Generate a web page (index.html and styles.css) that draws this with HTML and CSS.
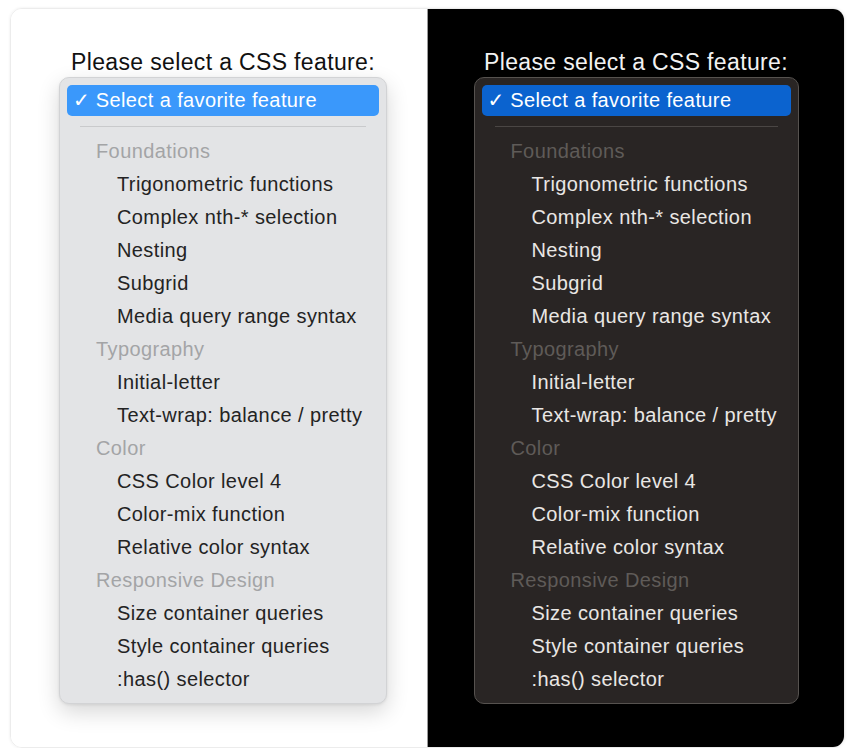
FILE: index.html
```html
<!DOCTYPE html>
<html>
<head>
<meta charset="utf-8">
<link rel="stylesheet" href="styles.css">
</head>
<body>
<div class="frame">
  <section class="panel light">
    <div class="label">Please select a CSS feature:</div>
    <div class="menu">
      <div class="selected"><span class="check">✓</span> Select a favorite feature</div>
      <div class="sep"></div>
      <div class="group">Foundations</div>
      <div class="item">Trigonometric functions</div>
      <div class="item">Complex nth-* selection</div>
      <div class="item">Nesting</div>
      <div class="item">Subgrid</div>
      <div class="item">Media query range syntax</div>
      <div class="group">Typography</div>
      <div class="item">Initial-letter</div>
      <div class="item">Text-wrap: balance / pretty</div>
      <div class="group">Color</div>
      <div class="item">CSS Color level 4</div>
      <div class="item">Color-mix function</div>
      <div class="item">Relative color syntax</div>
      <div class="group">Responsive Design</div>
      <div class="item">Size container queries</div>
      <div class="item">Style container queries</div>
      <div class="item">:has() selector</div>
    </div>
  </section>
  <section class="panel dark">
    <div class="label">Please select a CSS feature:</div>
    <div class="menu">
      <div class="selected"><span class="check">✓</span> Select a favorite feature</div>
      <div class="sep"></div>
      <div class="group">Foundations</div>
      <div class="item">Trigonometric functions</div>
      <div class="item">Complex nth-* selection</div>
      <div class="item">Nesting</div>
      <div class="item">Subgrid</div>
      <div class="item">Media query range syntax</div>
      <div class="group">Typography</div>
      <div class="item">Initial-letter</div>
      <div class="item">Text-wrap: balance / pretty</div>
      <div class="group">Color</div>
      <div class="item">CSS Color level 4</div>
      <div class="item">Color-mix function</div>
      <div class="item">Relative color syntax</div>
      <div class="group">Responsive Design</div>
      <div class="item">Size container queries</div>
      <div class="item">Style container queries</div>
      <div class="item">:has() selector</div>
    </div>
  </section>
</div>
</body>
</html>
```
FILE: styles.css
```css
html, body {
  margin: 0;
  padding: 0;
  background: #ffffff;
}
body {
  font-family: "Liberation Sans", Arial, sans-serif;
}
.frame {
  margin: 8px 0 0 10px;
  width: 835px;
  height: 740px;
  box-sizing: border-box;
  border: 1px solid #ececec;
  border-radius: 12px;
  box-shadow: 0 0 3px rgba(0,0,0,0.08);
  overflow: hidden;
  display: grid;
  grid-template-columns: 417px 1fr;
}
.panel {
  display: flex;
  flex-direction: column;
  align-items: center;
  padding-top: 40px;
}
.light {
  background: #ffffff;
  border-right: 1px solid #9a9a9a;
  padding-left: 8px;
}
.dark {
  background: #000000;
}
.label {
  font-size: 23px;
  line-height: 27px;
  letter-spacing: 0.35px;
}
.light .label { color: #111; }
.dark .label { color: #f2f2f2; }
.menu {
  margin-top: 1px;
  box-sizing: border-box;
  border-radius: 10px;
  padding: 7px 7px 7px;
  font-size: 20px;
  letter-spacing: 0.4px;
}
.light .menu {
  width: 328px;
  background: #e3e4e6;
  border: 1px solid #d2d3d5;
  box-shadow: 0 8px 22px rgba(0,0,0,0.16), 0 1px 3px rgba(0,0,0,0.08);
}
.dark .menu {
  width: 325px;
  background: #292524;
  border: 1px solid #56524f;
}
.selected {
  height: 31px;
  line-height: 31px;
  border-radius: 5px;
  padding-left: 6px;
  color: #ffffff;
}
.light .selected { background: #3a98fb; }
.dark .selected { background: #0b63cf; }
.check { font-family: "DejaVu Sans", sans-serif; font-size: 20px; font-weight: bold; letter-spacing: 0; }
.sep {
  height: 1px;
  margin: 10px 13px 8px;
}
.light .sep { background: #c9cacc; }
.dark .sep { background: #4a4644; }
.group, .item {
  height: 33px;
  line-height: 33px;
  white-space: nowrap;
}
.group { padding-left: 29px; }
.item { padding-left: 50px; }
.light .group { color: #a3a4a6; }
.light .item { color: #232323; }
.dark .group { color: #5f5b58; }
.dark .item { color: #e9e7e4; }
```
